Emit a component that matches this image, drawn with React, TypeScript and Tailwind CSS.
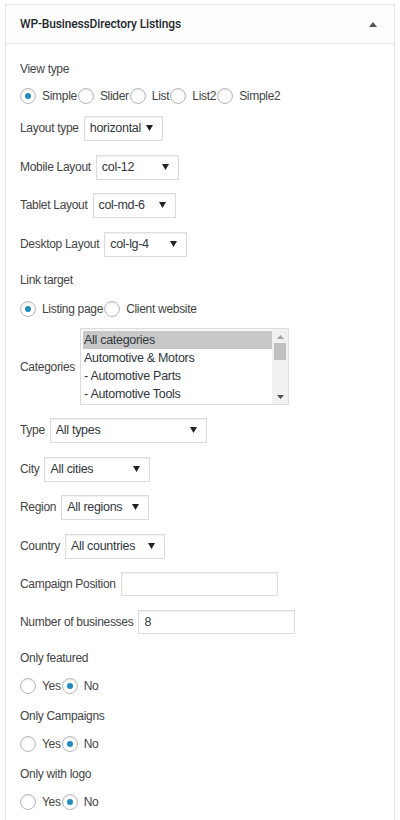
import React from 'react';

const font = { fontFamily: '"Liberation Sans", Arial, sans-serif' };

function Radio({ checked, label }: { checked?: boolean; label: string }) {
  return (
    <label className="flex items-center">
      <span className="w-4 h-4 rounded-full border border-[#b4b9be] bg-white shadow-[inset_0_1px_2px_rgba(0,0,0,0.1)] flex items-center justify-center shrink-0">
        {checked && <span className="w-[6px] h-[6px] rounded-full bg-[#1e8cbe]" />}
      </span>
      <span className="ml-[6px] mr-[1px]">{label}</span>
    </label>
  );
}

function Select({ value, width }: { value: string; width: string }) {
  return (
    <div className={`${width} h-[25px] border border-[#ddd] bg-white shadow-[inset_0_1px_2px_rgba(0,0,0,0.07)] flex items-center justify-between pl-[5px] pr-[9px] text-[#32373c] text-[12.5px]`}>
      <span>{value}</span>
      <svg width="7" height="6" viewBox="0 0 7 6" className="shrink-0">
        <path d="M0 0h7L3.5 6z" fill="#222" />
      </svg>
    </div>
  );
}

function Row({ mt, children }: { mt: string; children: React.ReactNode }) {
  return <div className={`${mt} h-[26px] flex items-center`}>{children}</div>;
}

export default function App() {
  const cats = ['All categories', 'Automotive & Motors', '- Automotive Parts', '- Automotive Tools'];
  return (
    <div className="bg-white w-[400px] h-[820px] overflow-hidden pt-1" style={font}>
      <div className="mx-[5px] border border-b-0 border-[#e5e5e5] h-[830px] text-[12px] tracking-[-0.3px] text-[#444]">
        <div className="h-[39px] border-b border-[#e5e5e5] bg-[#fdfdfd] flex items-center justify-between pl-[14px] pr-[17px]">
          <span className="text-[12px] font-medium tracking-[-0.15px] text-[#23282d]" style={{ fontFamily: 'Roboto, sans-serif' }}>
            WP-BusinessDirectory Listings
          </span>
          <svg width="8" height="5" viewBox="0 0 8 5">
            <path d="M0 5L4 0l4 5z" fill="#555" />
          </svg>
        </div>
        <div className="px-[14px] pt-[12px]">
          <Row mt="mt-0">View type</Row>
          <Row mt="mt-[1px]">
            <Radio checked label="Simple" />
            <Radio label="Slider" />
            <Radio label="List" />
            <Radio label="List2" />
            <Radio label="Simple2" />
          </Row>
          <Row mt="mt-[6px]">
            <span className="mr-[5px]">Layout type</span>
            <Select value="horizontal" width="w-[79px]" />
          </Row>
          <Row mt="mt-[13px]">
            <span className="mr-[5px]">Mobile Layout</span>
            <Select value="col-12" width="w-[83px]" />
          </Row>
          <Row mt="mt-[12px]">
            <span className="mr-[5px]">Tablet Layout</span>
            <Select value="col-md-6" width="w-[83px]" />
          </Row>
          <Row mt="mt-[13px]">
            <span className="mr-[5px]">Desktop Layout</span>
            <Select value="col-lg-4" width="w-[83px]" />
          </Row>
          <Row mt="mt-[10px]">Link target</Row>
          <Row mt="mt-[3px]">
            <Radio checked label="Listing page" />
            <Radio label="Client website" />
          </Row>
          <div className="mt-[6px] flex items-center">
            <span className="mr-[5px]">Categories</span>
            <div className="w-[209px] h-[77px] border border-[#ddd] bg-white shadow-[inset_0_1px_2px_rgba(0,0,0,0.07)] flex text-[#32373c] text-[12.5px]">
              <div className="flex-1 pt-[2px] pl-[2px]">
                {cats.map((c, i) => (
                  <div key={c} className={`h-[18px] leading-[18px] pl-[1px] ${i === 0 ? 'bg-[#c8c8c8]' : ''}`}>
                    {c}
                  </div>
                ))}
              </div>
              <div className="w-[16px] bg-[#f1f1f1] flex flex-col items-center pt-[6px] pb-[5px]">
                <svg width="7" height="4" viewBox="0 0 7 4">
                  <path d="M0 4L3.5 0 7 4z" fill="#a3a3a3" />
                </svg>
                <div className="w-[12px] h-[17px] bg-[#c1c1c1] mt-[4px]" />
                <div className="flex-1" />
                <svg width="7" height="4" viewBox="0 0 7 4">
                  <path d="M0 0h7L3.5 4z" fill="#505050" />
                </svg>
              </div>
            </div>
          </div>
          <Row mt="mt-[12px]">
            <span className="mr-[5px]">Type</span>
            <Select value="All types" width="w-[157px]" />
          </Row>
          <Row mt="mt-[13px]">
            <span className="mr-[5px]">City</span>
            <Select value="All cities" width="w-[106px]" />
          </Row>
          <Row mt="mt-[12px]">
            <span className="mr-[5px]">Region</span>
            <Select value="All regions" width="w-[88px]" />
          </Row>
          <Row mt="mt-[13px]">
            <span className="mr-[5px]">Country</span>
            <Select value="All countries" width="w-[100px]" />
          </Row>
          <Row mt="mt-[12px]">
            <span className="mr-[5px]">Campaign Position</span>
            <div className="w-[157px] h-[24px] border border-[#ddd] bg-white shadow-[inset_0_1px_2px_rgba(0,0,0,0.07)]" />
          </Row>
          <Row mt="mt-[12px]">
            <span className="mr-[5px]">Number of businesses</span>
            <div className="w-[157px] h-[24px] border border-[#ddd] bg-white shadow-[inset_0_1px_2px_rgba(0,0,0,0.07)] flex items-center pl-[5px] text-[#32373c] text-[12.5px]">
              8
            </div>
          </Row>
          <Row mt="mt-[10px]">Only featured</Row>
          <Row mt="mt-[2px]">
            <Radio label="Yes" />
            <Radio checked label="No" />
          </Row>
          <Row mt="mt-[4px]">Only Campaigns</Row>
          <Row mt="mt-[2px]">
            <Radio label="Yes" />
            <Radio checked label="No" />
          </Row>
          <Row mt="mt-[4px]">Only with logo</Row>
          <Row mt="mt-[2px]">
            <Radio label="Yes" />
            <Radio checked label="No" />
          </Row>
        </div>
      </div>
    </div>
  );
}
